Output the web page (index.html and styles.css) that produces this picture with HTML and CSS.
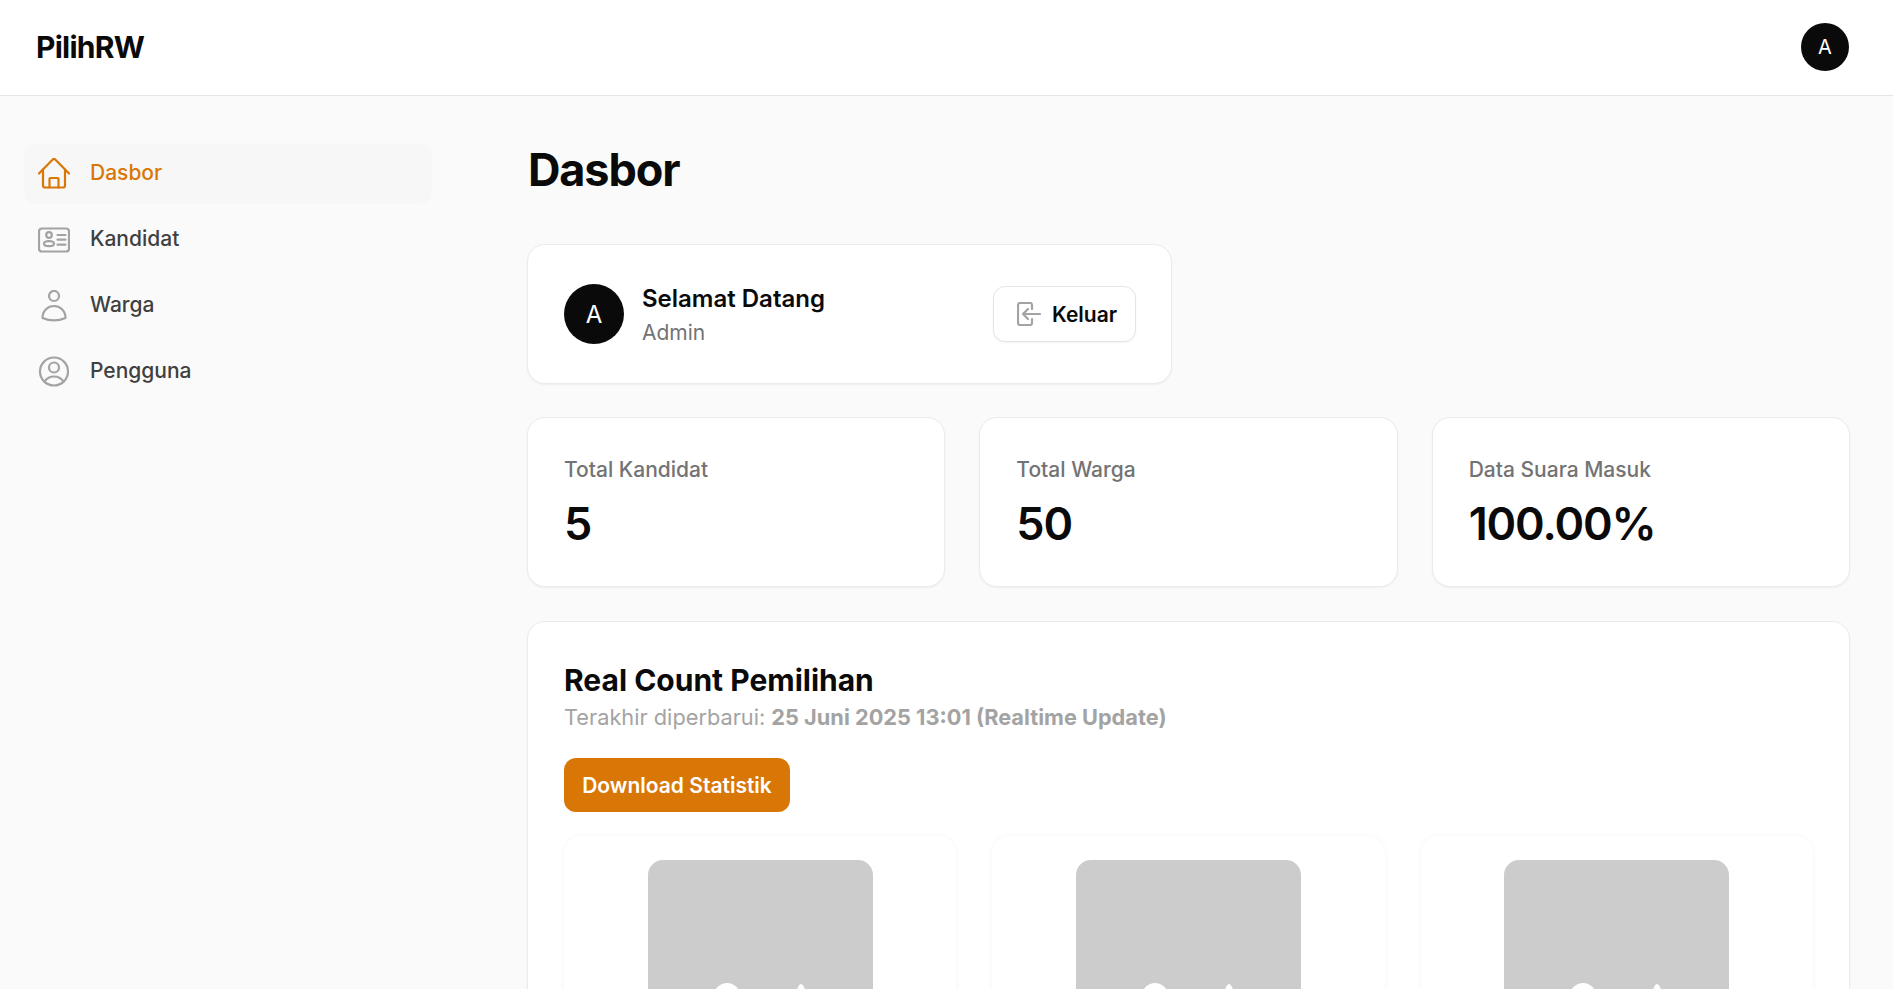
FILE: index.html
```html
<!DOCTYPE html>
<html lang="en">

<head>
    <meta charset="UTF-8">
    <meta name="viewport" content="width=device-width, initial-scale=1.0">
    <title>PilihRW - Dasbor</title>
    <link rel="stylesheet" href="styles.css">
</head>

<body>
    <header class="topbar">
        <div class="brand">PilihRW</div>
        <div class="avatar avatar-small">A</div>
    </header>

    <div class="layout">
        <aside class="sidebar">
            <a class="nav-item active">
                <svg class="nav-icon" viewBox="0 0 32 32" fill="none" stroke="currentColor" stroke-width="2.200" stroke-linecap="round" stroke-linejoin="round">
                    <path d="M1 15.5 14.500 1.700a2 2 0 0 1 3 0L31 15.500"/>
                    <path d="M5 11.500V27.500a2 2 0 0 0 2 2H25a2 2 0 0 0 2-2V11.500"/>
                    <path d="M11.500 29.500V21a1 1 0 0 1 1-1h7a1 1 0 0 1 1 1v8.500"/>
                </svg>
                <span>Dasbor</span>
            </a>
            <a class="nav-item">
                <svg class="nav-icon" viewBox="0 0 32 32" fill="none" stroke="currentColor" stroke-width="2.200" stroke-linecap="round" stroke-linejoin="round">
                    <rect x="1" y="4.500" width="30" height="23" rx="3"/>
                    <circle cx="11" cy="11" r="2.800"/>
                    <ellipse cx="11" cy="19.700" rx="5" ry="2.500"/>
                    <path d="M19.500 11h8M19.500 15.700h8M19.500 20.700h8"/>
                </svg>
                <span>Kandidat</span>
            </a>
            <a class="nav-item">
                <svg class="nav-icon" viewBox="0 0 32 32" fill="none" stroke="currentColor" stroke-width="2.200" stroke-linecap="round" stroke-linejoin="round">
                    <circle cx="16" cy="6" r="5"/>
                    <path d="M4.500 28C4.500 20.500 10 16 16 16s11.500 4.500 11.500 12C20 31.200 12 31.200 4.500 28Z"/>
                </svg>
                <span>Warga</span>
            </a>
            <a class="nav-item">
                <svg class="nav-icon" viewBox="0 0 32 32" fill="none" stroke="currentColor" stroke-width="2.200" stroke-linecap="round" stroke-linejoin="round">
                    <circle cx="16" cy="15.500" r="14"/>
                    <circle cx="16" cy="11.500" r="5"/>
                    <path d="M6.500 25.500C9 22 12 20.500 16 20.500s7 1.500 9.500 5"/>
                </svg>
                <span>Pengguna</span>
            </a>
        </aside>

        <main class="content">
            <h1 class="page-title">Dasbor</h1>

            <section class="card welcome">
                <div class="avatar avatar-big">A</div>
                <div class="welcome-text">
                    <div class="welcome-title">Selamat Datang</div>
                    <div class="welcome-role">Admin</div>
                </div>
                <button class="btn-logout">
                    <svg class="logout-icon" viewBox="0 0 24 24" fill="none" stroke="currentColor" stroke-width="2.200" stroke-linecap="round" stroke-linejoin="round">
                        <path d="M15 7V3a2 2 0 0 0-2-2H3a2 2 0 0 0-2 2v18a2 2 0 0 0 2 2h10a2 2 0 0 0 2-2v-4"/>
                        <path d="M23 12H6m0 0 5-5m-5 5 5 5"/>
                    </svg>
                    Keluar
                </button>
            </section>

            <section class="stats">
                <div class="card stat">
                    <div class="stat-label">Total Kandidat</div>
                    <div class="stat-value">5</div>
                </div>
                <div class="card stat">
                    <div class="stat-label">Total Warga</div>
                    <div class="stat-value">50</div>
                </div>
                <div class="card stat">
                    <div class="stat-label">Data Suara Masuk</div>
                    <div class="stat-value">100.00%</div>
                </div>
            </section>

            <section class="card realcount">
                <h2 class="realcount-title">Real Count Pemilihan</h2>
                <p class="realcount-sub">Terakhir diperbarui: <b>25 Juni 2025 13:01 (Realtime Update)</b></p>
                <button class="btn-download">Download Statistik</button>

                <div class="candidates">
                    <div class="candidate">
                        <div class="photo">
                            <svg class="photo-icon" viewBox="0 0 225 225" fill="#fff">
                                <circle cx="79" cy="136" r="13"/>
                                <path d="M115 225 150 127Q153 121 156 127L195 225Z"/>
                            </svg>
                        </div>
                    </div>
                    <div class="candidate">
                        <div class="photo">
                            <svg class="photo-icon" viewBox="0 0 225 225" fill="#fff">
                                <circle cx="79" cy="136" r="13"/>
                                <path d="M115 225 150 127Q153 121 156 127L195 225Z"/>
                            </svg>
                        </div>
                    </div>
                    <div class="candidate">
                        <div class="photo">
                            <svg class="photo-icon" viewBox="0 0 225 225" fill="#fff">
                                <circle cx="79" cy="136" r="13"/>
                                <path d="M115 225 150 127Q153 121 156 127L195 225Z"/>
                            </svg>
                        </div>
                    </div>
                </div>
            </section>
        </main>
    </div>
</body>

</html>
```

FILE: styles.css
```css
* {
    box-sizing: border-box;
}

html,
body {
    height: 100%;
}

body {
    margin: 0;
    overflow: hidden;
    background: #fafafa;
    color: #0a0a0a;
    font-family: Inter, "Liberation Sans", sans-serif;
}

/* header */

.topbar {
    height: 96px;
    padding: 0 44px 2px 36px;
    display: flex;
    align-items: center;
    justify-content: space-between;
    background: #fff;
    border-bottom: 1px solid #e5e5e5;
}

.brand {
    font-size: 30px;
    font-weight: 700;
    letter-spacing: -0.75px;
}

.avatar {
    display: flex;
    align-items: center;
    justify-content: center;
    flex-shrink: 0;
    border-radius: 50%;
    background: #0a0a0a;
    color: #fff;
}

.avatar-small {
    width: 48px;
    height: 48px;
    font-size: 20px;
}

.avatar-big {
    width: 60px;
    height: 60px;
    font-size: 24px;
}

/* sidebar */

.layout {
    display: flex;
}

.sidebar {
    width: 456px;
    flex-shrink: 0;
    padding: 48px 24px 0;
    display: flex;
    flex-direction: column;
    gap: 6px;
}

.nav-item {
    height: 60px;
    width: 408px;
    padding: 0 14px;
    display: flex;
    align-items: center;
    gap: 20px;
    border-radius: 12px;
    font-size: 21px;
    font-weight: 500;
    color: #404040;
}

.nav-item span {
    padding-bottom: 3px;
}

.nav-item.active {
    background: #f7f7f7;
    color: #d97706;
}

.nav-icon {
    width: 32px;
    height: 32px;
    color: #a3a3a3;
    flex-shrink: 0;
}

.active .nav-icon {
    color: #d97706;
}

/* main */

.content {
    flex: 1;
    min-width: 0;
    padding: 47px 43px 0 71px;
}

.page-title {
    margin: 0 0 47px 1px;
    font-size: 45px;
    line-height: 54px;
    font-weight: 700;
    letter-spacing: -1.125px;
}

.card {
    background: #fff;
    border: 1px solid #ebebeb;
    border-radius: 18px;
    box-shadow: 0 1px 2px rgba(0, 0, 0, 0.05);
}

.welcome {
    width: 645px;
    height: 140px;
    padding: 0 35px 0 36px;
    display: flex;
    align-items: center;
    gap: 18px;
}

.welcome-text {
    flex: 1;
    padding-top: 1px;
}

.welcome-title {
    font-size: 24px;
    line-height: 32px;
    font-weight: 600;
}

.welcome-role {
    margin-top: 4px;
    font-size: 21px;
    line-height: 28px;
    color: #737373;
}

.btn-logout {
    width: 143px;
    height: 56px;
    padding: 0 0 0 23px;
    display: flex;
    align-items: center;
    gap: 11px;
    background: #fff;
    border: 1px solid #e5e5e5;
    border-radius: 12px;
    box-shadow: 0 1px 2px rgba(0, 0, 0, 0.05);
    color: #0a0a0a;
    font-family: inherit;
    font-size: 21px;
    font-weight: 600;
}

.logout-icon {
    width: 24px;
    height: 24px;
    color: #a3a3a3;
}

.stats {
    margin-top: 33px;
    display: grid;
    grid-template-columns: repeat(3, 1fr);
    gap: 34px;
}

.stat {
    height: 170px;
    padding: 38px 36px 0;
}

.stat-label {
    font-size: 21px;
    line-height: 28px;
    font-weight: 500;
    color: #737373;
}

.stat-value {
    margin-top: 10px;
    font-size: 45px;
    line-height: 60px;
    font-weight: 600;
    letter-spacing: -1.125px;
}

.realcount {
    margin-top: 34px;
    padding: 38px 36px 36px;
    height: 800px;
}

.realcount-title {
    margin: 0;
    font-size: 30px;
    line-height: 40px;
    font-weight: 700;
}

.realcount-sub {
    margin: 1px 0 0;
    font-size: 21.75px;
    line-height: 32px;
    color: #a3a3a3;
}

.realcount-sub b {
    font-weight: 700;
}

.btn-download {
    display: block;
    margin-top: 25px;
    width: 226px;
    height: 54px;
    background: #d97706;
    border: 0;
    border-radius: 12px;
    color: #fff;
    font-family: inherit;
    font-size: 21px;
    font-weight: 600;
}

.candidates {
    margin-top: 24px;
    display: grid;
    grid-template-columns: repeat(3, 1fr);
    gap: 36px;
}

.candidate {
    height: 400px;
    padding: 24px 0 0;
    background: #fff;
    border-radius: 18px;
    box-shadow: 0 0 6px rgba(0, 0, 0, 0.04);
}

.photo {
    width: 225px;
    height: 225px;
    margin: 0 auto;
    background: #cccccc;
    border-radius: 15px;
    overflow: hidden;
}

.photo-icon {
    display: block;
    width: 225px;
    height: 225px;
}
```
